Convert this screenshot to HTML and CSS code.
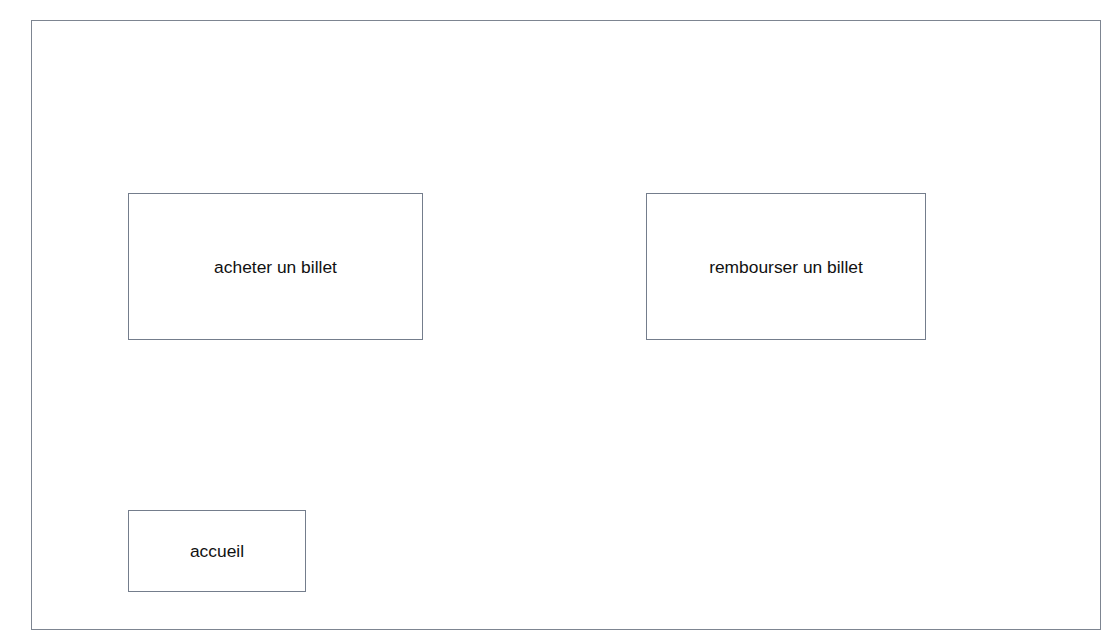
FILE: index.html
```html
<!DOCTYPE html>
<html lang="fr">
<head>
<meta charset="utf-8">
<title>Billets</title>
<link rel="stylesheet" href="styles.css">
</head>
<body>
<div class="frame">
  <div class="row">
    <div class="box box-buy">acheter un billet</div>
    <div class="box box-refund">rembourser un billet</div>
  </div>
  <div class="row row-bottom">
    <div class="box box-home">accueil</div>
  </div>
</div>
</body>
</html>
```
FILE: styles.css
```css
* { box-sizing: border-box; }
html, body { margin: 0; padding: 0; background: #fff; }
body {
  font-family: "Liberation Sans", Arial, sans-serif;
  font-size: 17.4px;
  color: #111;
  padding: 20px 0 0 31px;
}
.frame {
  width: 1070px;
  height: 610px;
  border: 1px solid #7d8591;
  padding: 172px 0 0 96px;
}
.row {
  display: flex;
  gap: 223px;
}
.row-bottom { margin-top: 170px; }
.box {
  border: 1px solid #747d8c;
  display: flex;
  align-items: center;
  justify-content: center;
  padding-top: 1px;
}
.box-buy { width: 295px; height: 147px; }
.box-refund { width: 280px; height: 147px; }
.box-home { width: 178px; height: 82px; }
```
